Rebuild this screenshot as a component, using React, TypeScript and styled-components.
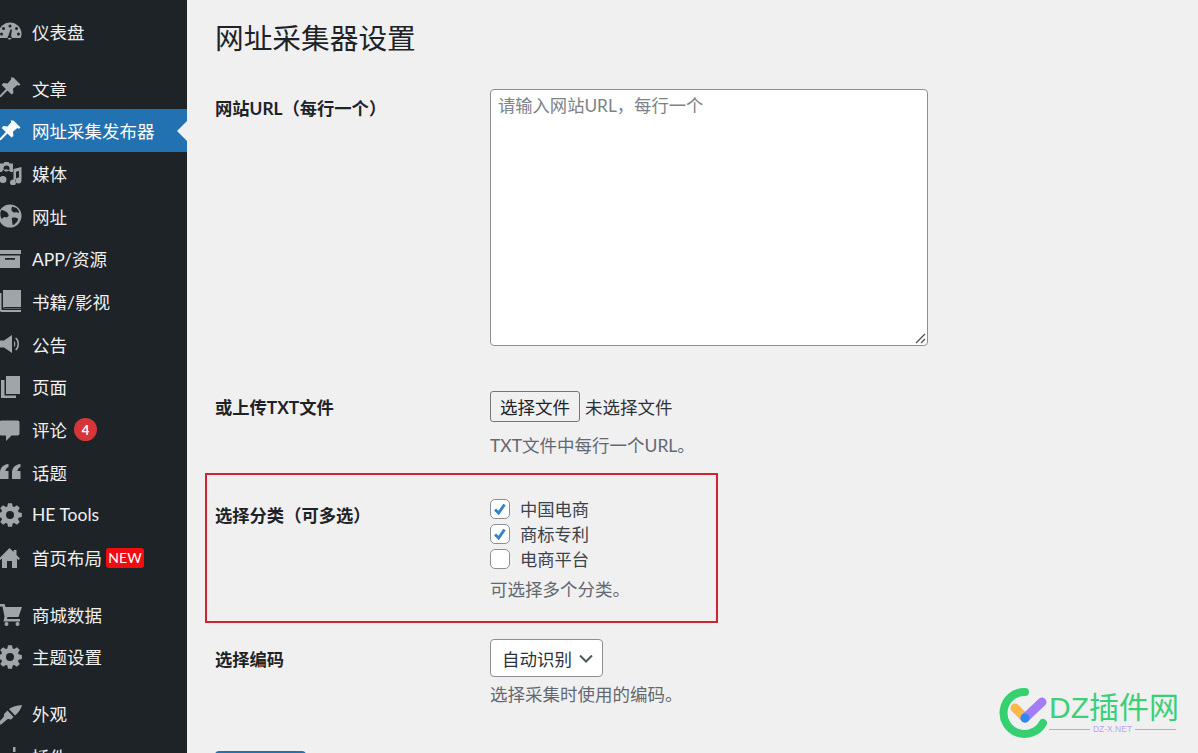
import React from "react";
import styled, { createGlobalStyle } from "styled-components";

const cjk = `Lato, "Noto Sans CJK SC", sans-serif`;

const GlobalStyle = createGlobalStyle`
  html, body {
    margin: 0;
    padding: 0;
    height: 100%;
    overflow: hidden;
    background: #f0f0f1;
  }
  * { box-sizing: border-box; }
`;

const Page = styled.div`
  display: flex;
  width: 1198px;
  height: 753px;
  overflow: hidden;
  font-family: ${cjk};
  color: #2c3338;
`;

const Sidebar = styled.nav`
  flex: 0 0 187px;
  height: 753px;
  background: #1d2327;
  padding-top: 10px;
  overflow: hidden;
`;

const MenuGroup = styled.div`
  margin-bottom: 14px;
`;

const MenuRow = styled.div<{ $active?: boolean }>`
  position: relative;
  display: flex;
  align-items: center;
  height: 42.7px;
  padding-left: 32px;
  gap: 7px;
  font-size: 17.5px;
  color: ${(p) => (p.$active ? "#fff" : "#f0f0f1")};
  background: ${(p) => (p.$active ? "#2271b1" : "transparent")};
  ${(p) =>
    p.$active &&
    `&::after {
      content: "";
      position: absolute;
      right: 0;
      top: 50%;
      margin-top: -10px;
      border: 10px solid transparent;
      border-right-color: #f0f0f1;
    }`}
`;

const MenuIcon = styled.svg<{ $active?: boolean }>`
  position: absolute;
  left: -2px;
  top: 50%;
  margin-top: -12px;
  width: 24px;
  height: 24px;
  fill: ${(p) => (p.$active ? "#fff" : "#a0a5aa")};
`;

const CountBadge = styled.span`
  display: inline-flex;
  align-items: center;
  justify-content: center;
  width: 23px;
  height: 23px;
  border-radius: 50%;
  background: #d63638;
  color: #fff;
  font-size: 13px;
  font-weight: 700;
`;

const NewBadge = styled.span`
  display: inline-flex;
  align-items: center;
  justify-content: center;
  width: 38px;
  height: 20px;
  margin-left: -3px;
  border-radius: 3px;
  background: #f00d12;
  color: #fff;
  font-size: 14px;
`;

const Main = styled.main`
  position: relative;
  flex: 1;
  padding: 0 0 0 28px;
`;

const Heading = styled.h1`
  margin: 0;
  height: 89px;
  padding-top: 18px;
  font-size: 28.7px;
  line-height: 40px;
  font-weight: 400;
  color: #1d2327;
`;

const FormRow = styled.div<{ $height: number; $gap?: number }>`
  display: flex;
  height: ${(p) => p.$height}px;
  margin-top: ${(p) => p.$gap ?? 0}px;
`;

const HighlightRow = styled.div`
  display: flex;
  width: 513px;
  height: 150px;
  margin-left: -10px;
  padding: 21px 0 0 8px;
  border: 2px solid #d0232f;
`;

const Label = styled.div<{ $top?: number }>`
  flex: 0 0 275px;
  padding-top: ${(p) => p.$top ?? 0}px;
  font-size: 17.3px;
  line-height: 24px;
  font-weight: 700;
  color: #1d2327;
`;

const Field = styled.div`
  flex: 1;
  display: flex;
  flex-direction: column;
  align-items: flex-start;
`;

const UrlInput = styled.div`
  position: relative;
  width: 438px;
  height: 257px;
  padding: 4px 7px;
  background: #fff;
  border: 1px solid #8c8f94;
  border-radius: 4px;
  font-size: 17.3px;
  line-height: 24px;
  color: #7d8288;
`;

const ResizeGrip = styled.svg`
  position: absolute;
  right: 1px;
  bottom: 1px;
  width: 12px;
  height: 12px;
  stroke: #555;
  stroke-width: 1.4;
`;

const FileLine = styled.div`
  display: flex;
  align-items: center;
  gap: 5px;
  font-size: 17.5px;
  color: #2c3338;
`;

const FileButton = styled.div`
  display: flex;
  align-items: center;
  justify-content: center;
  width: 90px;
  height: 31px;
  background: #f0f0f0;
  border: 1px solid #767676;
  border-radius: 3px;
  color: #1d2327;
`;

const Hint = styled.p<{ $top: number }>`
  margin: ${(p) => p.$top}px 0 0;
  font-size: 17.5px;
  line-height: 24px;
  color: #646970;
`;

const CheckRow = styled.div`
  display: flex;
  align-items: center;
  gap: 10px;
  height: 25px;
  font-size: 17.3px;
  color: #3c434a;
`;

const CheckBox = styled.span`
  display: flex;
  align-items: center;
  justify-content: center;
  width: 20px;
  height: 20px;
  background: #fff;
  border: 1px solid #8c8f94;
  border-radius: 5px;
  svg {
    width: 18px;
    height: 18px;
    fill: none;
    stroke: #3582c4;
    stroke-width: 3.2;
  }
`;

const SelectBox = styled.div`
  display: flex;
  align-items: center;
  justify-content: space-between;
  width: 113px;
  height: 38px;
  padding: 0 9px 0 11px;
  background: #fff;
  border: 1px solid #8c8f94;
  border-radius: 4px;
  font-size: 17.5px;
  color: #2c3338;
  svg {
    width: 14px;
    height: 9px;
    stroke: #50575e;
    stroke-width: 2;
    fill: none;
  }
`;

const SubmitEdge = styled.div`
  width: 91px;
  height: 34px;
  background: #2271b1;
  border-radius: 4px 4px 0 0;
`;

const Watermark = styled.div`
  position: absolute;
  right: 0;
  bottom: 0;
  width: 200px;
  height: 68px;
`;

const WatermarkMark = styled.svg`
  position: absolute;
  left: 0;
  top: 0;
  width: 52px;
  height: 58px;
`;

const WatermarkTitle = styled.div`
  position: absolute;
  left: 51px;
  top: 5px;
  font-family: "Liberation Sans", "Noto Sans CJK SC", sans-serif;
  font-size: 30px;
  line-height: 36px;
  white-space: nowrap;
  color: #3bd077;
`;

const WatermarkSub = styled.div`
  position: absolute;
  left: 51px;
  top: 39px;
  width: 127px;
  display: flex;
  align-items: center;
  gap: 3px;
  font-family: "Liberation Sans", sans-serif;
  font-size: 8.5px;
  color: #b7a6f0;
  white-space: nowrap;
  &::before,
  &::after {
    content: "";
    flex: 1;
    height: 1px;
    background: #b7a6f0;
  }
`;

// eight toothed cog, same outline for HE Tools and the theme settings entry
const gearPath = () => {
  const cx = 12;
  const cy = 12;
  const pts: string[] = [];
  for (let i = 0; i < 8; i++) {
    const a = (i * Math.PI) / 4;
    [
      [-0.3, 9],
      [-0.17, 12],
      [0.17, 12],
      [0.3, 9],
    ].forEach(([da, r]) => {
      pts.push(`${(cx + r * Math.sin(a + da)).toFixed(2)} ${(cy - r * Math.cos(a + da)).toFixed(2)}`);
    });
  }
  return `M${pts.join("L")}Z M12 8a4 4 0 1 0 0 8 4 4 0 0 0 0-8Z`;
};

const icons: Record<string, React.ReactNode> = {
  dashboard: (
    <path
      d="M12 3.500A11.500 11.500 0 0 0 .5 15c0 1.400.3 2.800.9 4h21.200c.6-1.200.9-2.600.9-4A11.500 11.500 0 0 0 12 3.500Zm0 2a1.500 1.500 0 1 1 0 3 1.500 1.500 0 0 1 0-3ZM5.500 8a1.500 1.500 0 1 1 0 3 1.500 1.500 0 0 1 0-3Zm13 0a1.500 1.500 0 1 1 0 3 1.500 1.500 0 0 1 0-3ZM3.500 13.500a1.500 1.500 0 1 1 0 3 1.500 1.500 0 0 1 0-3Zm17 0a1.500 1.500 0 1 1 0 3 1.500 1.500 0 0 1 0-3Zm-6.500-3-1 6.500a2 2 0 1 1-2.700.1l2.300-6.800 1.400.2Z"
      fillRule="evenodd"
    />
  ),
  pin: <path d="M15.500 1.500 22.500 8.500l-1.600 1.200-1.600-.6-4.300 3.600.4 4.300-1.800 1.600-4.200-4.200L3 21l-2.200.8.800-2.200 6.300-6.500-4.200-4.200L5.300 7.100l4.300.4 3.600-4.300-.5-1.700 2.800 0Z" />,
  media: (
    <path
      d="M2 2.500h3.500l1-1.500h4l1 1.500H15v8.500h-2.500a5 5 0 0 0-9 0H2V2.500Zm6.500 2a3 3 0 1 0 0 6 3 3 0 0 0 0-6ZM23.500 6v13.500a3 3 0 1 1-2.500-3V10l-3 .8v10.700a3 3 0 1 1-2.500-3V8l8-2ZM5 15a3.500 3.500 0 1 1 0 7 3.500 3.500 0 0 1 0-7Z"
      fillRule="evenodd"
    />
  ),
  globe: (
    <path
      d="M12 .5a11.500 11.500 0 1 0 0 23 11.500 11.500 0 0 0 0-23ZM3.500 6c2 .500 3.500.500 5 2s2.500 2.500 2 4-3 1.500-4 1-2 2.500-3 1.500-2-6 0-8.500ZM14 2.500l4.500 1.500c1.500 1.500 2.500 3 2.500 5-1.500 0-2.500-1-4-.5S14 7.500 13.500 6 14 4 14 2.500Zm1 11c2.500 0 4.500 0 5 1.500s-3 5.500-4.500 6-1-3-1.500-4.500 0-3 1-3Z"
      fillRule="evenodd"
    />
  ),
  archive: <path d="M1 3h22v4H1V3Zm1 5.500h20V21H2V8.500ZM7 11v1.800h10V11H7Z" fillRule="evenodd" />,
  book: (
    <path
      d="M5 1h18v17H7a2.500 2.500 0 0 0-2 1V1ZM2 4h1.500v16c0 .6.400 1 1 1H23v2H4a2.500 2.500 0 0 1-2.500-2.500L2 4Zm4 15.500h17V20H6v-.5Z"
      fillRule="evenodd"
    />
  ),
  megaphone: (
    <path
      d="M1 8.500h5L14 3v18l-8-5.500H1v-7Zm15 .5c1.800 1 1.800 5 0 6V9Zm2-3.500c4 2 4 11 0 13l-.8-1.300c2.900-2 2.900-8.400 0-10.400L18 5.500Z"
      fillRule="evenodd"
    />
  ),
  pages: <path d="M8 1h14v18H8V1ZM3 5h3.500v15.500H18V23H3V5Z" />,
  comment: (
    <path d="M3.500 2.500h16A2 2 0 0 1 21.500 4.500v11a2 2 0 0 1-2 2h-6L8 23v-5.500H3.500a2 2 0 0 1-2-2v-11a2 2 0 0 1 2-2Z" />
  ),
  quote: (
    <path d="M10.500 4v3C8 8.200 7.500 9.800 7.500 11h3v8H2v-6C2 8 5 4.500 10.500 4Zm12 0v3c-2.500 1.200-3 2.800-3 4h3v8H14v-6c0-5 3-8.500 8.500-9Z" />
  ),
  gear: <path d={gearPath()} fillRule="evenodd" />,
  home: <path d="M11.500 2 1 12.500l1.400 1.400L4 12.500V22h15v-9.500l1.600 1.400 1.400-1.400L18.500 9V4h-3v2L11.500 2ZM9 15h5v7H9v-7Z" fillRule="evenodd" />,
  cart: <path d="M1 2h5.500l1 3H24l-3.500 10H9.500L9 17h13v2.500H5.500l1-5L4.500 4.500H1V2Zm7.500 18a2 2 0 1 1 0 4 2 2 0 0 1 0-4Zm11 0a2 2 0 1 1 0 4 2 2 0 0 1 0-4Z" />,
  brush: <path d="M24 3c-5 .5-10 1.500-13 4l6 6.500c3.500-2.500 6-6.500 7-10.500ZM9.500 8.500l6 6.500-2.500 2.500c-2-.5-3-1-4 0l-6.500 5.500-1-3.500 4-4.500c1-1.200 0-2.500 1-3.500l3-3Z" />,
  plugin: <path d="M15 3h2.500v5H15V3ZM8 9h12v3c0 3-2 5-5 5v5h-3v-5c-3 0-4-2-4-5V9Z" />,
};

type MenuEntry = { icon: string; label: string; active?: boolean; badge?: React.ReactNode };

const menuGroups: MenuEntry[][] = [
  [{ icon: "dashboard", label: "仪表盘" }],
  [
    { icon: "pin", label: "文章" },
    { icon: "pin", label: "网址采集发布器", active: true },
    { icon: "media", label: "媒体" },
    { icon: "globe", label: "网址" },
    { icon: "archive", label: "APP/资源" },
    { icon: "book", label: "书籍/影视" },
    { icon: "megaphone", label: "公告" },
    { icon: "pages", label: "页面" },
    { icon: "comment", label: "评论", badge: <CountBadge>4</CountBadge> },
    { icon: "quote", label: "话题" },
    { icon: "gear", label: "HE Tools" },
    { icon: "home", label: "首页布局", badge: <NewBadge>NEW</NewBadge> },
  ],
  [
    { icon: "cart", label: "商城数据" },
    { icon: "gear", label: "主题设置" },
  ],
  [
    { icon: "brush", label: "外观" },
    { icon: "plugin", label: "插件" },
  ],
];

const categories = [
  { label: "中国电商", checked: true },
  { label: "商标专利", checked: true },
  { label: "电商平台", checked: false },
];

export default function App() {
  return (
    <Page>
      <GlobalStyle />
      <Sidebar>
        {menuGroups.map((group, i) => (
          <MenuGroup key={i}>
            {group.map((item) => (
              <MenuRow key={item.label} $active={item.active}>
                <MenuIcon viewBox="0 0 24 24" $active={item.active}>
                  {icons[item.icon]}
                </MenuIcon>
                <span>{item.label}</span>
                {item.badge}
              </MenuRow>
            ))}
          </MenuGroup>
        ))}
      </Sidebar>
      <Main>
        <Heading>网址采集器设置</Heading>
        <FormRow $height={298}>
          <Label $top={8}>网站URL（每行一个）</Label>
          <Field>
            <UrlInput>
              请输入网站URL，每行一个
              <ResizeGrip viewBox="0 0 12 12">
                <path d="M11 2 2 11M11 7 7 11" />
              </ResizeGrip>
            </UrlInput>
          </Field>
        </FormRow>
        <FormRow $height={82} $gap={4}>
          <Label $top={5}>或上传TXT文件</Label>
          <Field>
            <FileLine>
              <FileButton>选择文件</FileButton>
              未选择文件
            </FileLine>
            <Hint $top={12}>TXT文件中每行一个URL。</Hint>
          </Field>
        </FormRow>
        <HighlightRow>
          <Label $top={8}>选择分类（可多选）</Label>
          <Field>
            {categories.map((c) => (
              <CheckRow key={c.label}>
                <CheckBox>
                  {c.checked && (
                    <svg viewBox="0 0 20 20">
                      <path d="M4.500 10.500 8.500 14.500 15 5" />
                    </svg>
                  )}
                </CheckBox>
                {c.label}
              </CheckRow>
            ))}
            <Hint $top={7}>可选择多个分类。</Hint>
          </Field>
        </HighlightRow>
        <FormRow $height={112} $gap={16}>
          <Label $top={9}>选择编码</Label>
          <Field>
            <SelectBox>
              自动识别
              <svg viewBox="0 0 14 9">
                <path d="M1 1.500 7 7.500 13 1.500" />
              </svg>
            </SelectBox>
            <Hint $top={6}>选择采集时使用的编码。</Hint>
          </Field>
        </FormRow>
        <SubmitEdge />
        <Watermark>
          <WatermarkMark viewBox="0 0 52 58">
            <path d="M27 7A21 21 0 1 0 45 38" fill="none" stroke="#35d06f" strokeWidth="8" strokeLinecap="round" />
            <path d="M17 23 27 33" stroke="#fdb84a" strokeWidth="9" strokeLinecap="round" />
            <path d="M27 33 44 17" stroke="#a47cf3" strokeWidth="9" strokeLinecap="round" />
            <circle cx="27" cy="33" r="4.500" fill="#2b8bf2" />
          </WatermarkMark>
          <WatermarkTitle>DZ插件网</WatermarkTitle>
          <WatermarkSub>DZ-X.NET</WatermarkSub>
        </Watermark>
      </Main>
    </Page>
  );
}
